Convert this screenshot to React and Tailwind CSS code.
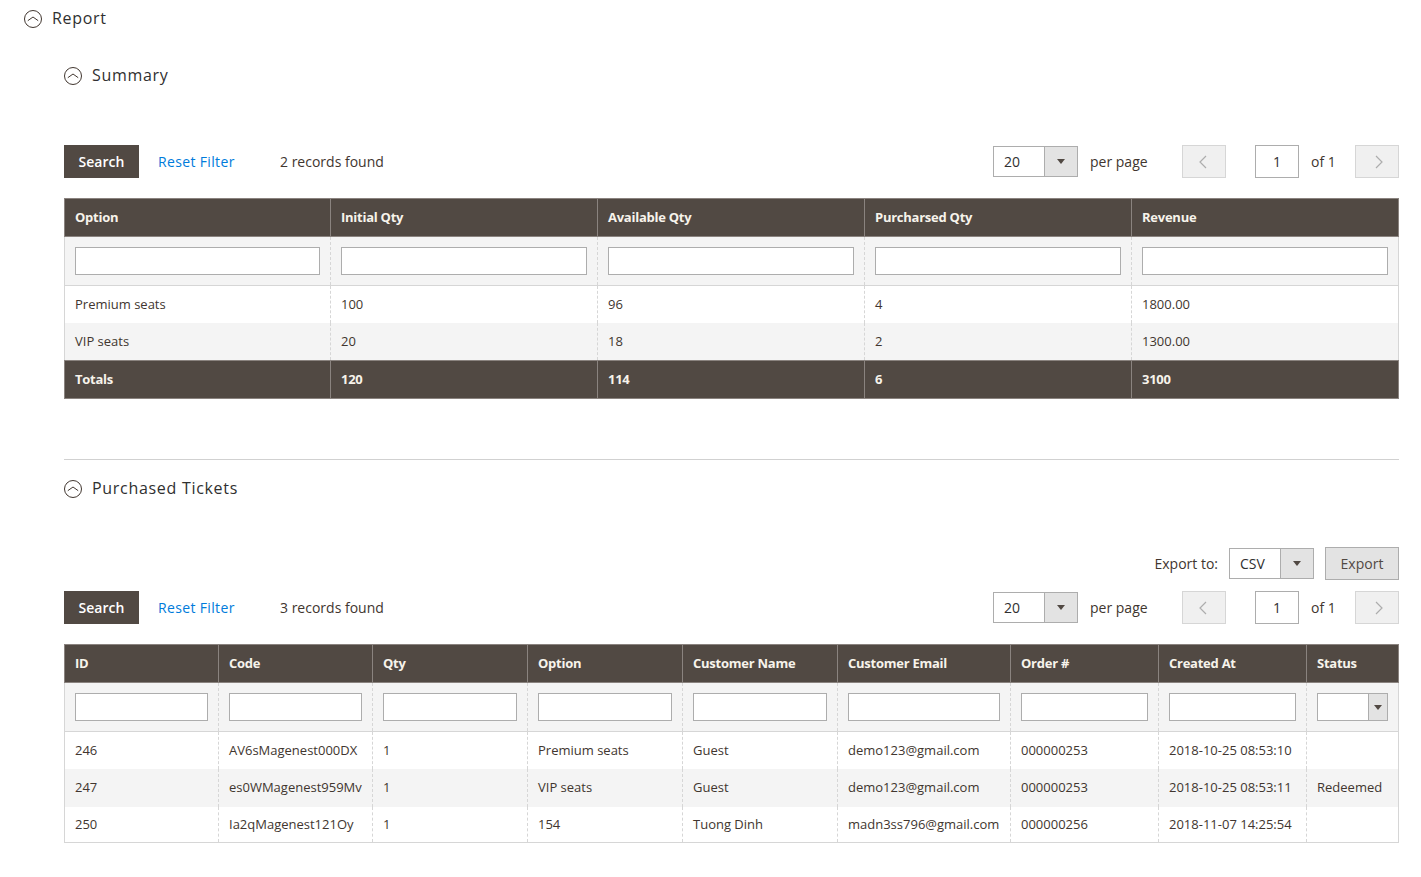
import React from 'react'

const FONT = "font-['Open_Sans',sans-serif]"

function Collapse({ title, className }) {
  return (
    <div className={`flex items-center gap-[10px] text-[#303030] ${className}`}>
      <svg width="18" height="18" viewBox="0 0 18 18" fill="none" stroke="#41362f" strokeWidth="1" className="shrink-0 mt-[2px]">
        <circle cx="9" cy="9" r="8.5" />
        <path d="M3.8 10.7 9 7l5.2 3.7" />
      </svg>
      <span className="text-[16px] font-medium leading-[22px] tracking-[0.7px]">{title}</span>
    </div>
  )
}

function Arrow() {
  return (
    <div className="w-0 h-0 border-l-[4px] border-r-[4px] border-t-[5px] border-l-transparent border-r-transparent border-t-[#514943]" />
  )
}

function SelectBox({ value, textWidth, height = 'h-[31px]' }) {
  return (
    <div className={`flex ${height} border border-[#adadad] bg-white text-[14px] text-[#303030]`}>
      <div className={`${textWidth} pl-[10px] leading-[29px]`}>{value}</div>
      <div className="w-[33px] flex items-center justify-center bg-[#e3e3e3] border-l border-[#adadad]">
        <Arrow />
      </div>
    </div>
  )
}

function PageButton({ dir }) {
  return (
    <div className="w-[44px] h-[33px] flex items-center justify-center bg-[#f0f0f0] border border-[#d6d6d6]">
      <svg width="10" height="14" viewBox="0 0 10 14" fill="none" stroke="#adadad" strokeWidth="1.2" className={dir === 'prev' ? 'mr-[3px]' : 'ml-[3px]'}>
        <path d={dir === 'prev' ? 'M8 1 2 7l6 6' : 'M2 1l6 6-6 6'} />
      </svg>
    </div>
  )
}

function Toolbar({ records }) {
  return (
    <div className="flex items-center h-[33px] text-[14px] text-[#41362f]">
      <div className="w-[75px] h-[33px] bg-[#514943] text-white font-semibold flex items-center justify-center">Search</div>
      <div className="ml-[19px] w-[76px] text-[#007bdb] whitespace-nowrap tracking-[0.35px]">Reset Filter</div>
      <div className="ml-[46px] whitespace-nowrap">{records} records found</div>
      <div className="ml-auto flex items-center">
        <SelectBox value="20" textWidth="w-[50px]" />
        <span className="ml-[12px] w-[92px] whitespace-nowrap">per page</span>
        <PageButton dir="prev" />
        <div className="ml-[29px] w-[44px] h-[33px] border border-[#adadad] bg-white flex items-center justify-center text-[#303030]">1</div>
        <span className="ml-[12px] w-[44px] whitespace-nowrap">of 1</span>
        <PageButton dir="next" />
      </div>
    </div>
  )
}

const thCls = 'h-[38px] px-[10px] py-0 text-left text-[13px] font-bold tracking-[-0.25px] text-[#f7f3eb] bg-[#514943] border border-[#8a837f]'
const filterCls = 'h-[49px] px-[10px] py-0 bg-[#f4f4f4] border border-dashed border-[#d6d6d6] [border-top-style:solid] [border-bottom-style:solid]'
const tdCls = 'h-[37.5px] px-[10px] py-0 text-[13px] text-[#41362f] border-x border-dashed border-x-[#d6d6d6] whitespace-nowrap'

function FilterInput() {
  return <div className="h-[28px] w-full border border-[#adadad] bg-white" />
}

const summaryCols = [
  ['Option', 'w-[266px]'],
  ['Initial Qty', 'w-[267px]'],
  ['Available Qty', 'w-[267px]'],
  ['Purcharsed Qty', 'w-[267px]'],
  ['Revenue', 'w-[267px]'],
]
const summaryRows = [
  ['Premium seats', '100', '96', '4', '1800.00'],
  ['VIP seats', '20', '18', '2', '1300.00'],
]
const summaryTotals = ['Totals', '120', '114', '6', '3100']

const ticketCols = [
  ['ID', 'w-[154px]'],
  ['Code', 'w-[154px]'],
  ['Qty', 'w-[155px]'],
  ['Option', 'w-[155px]'],
  ['Customer Name', 'w-[155px]'],
  ['Customer Email', 'w-[173px]'],
  ['Order #', 'w-[148px]'],
  ['Created At', 'w-[148px]'],
  ['Status', 'w-[92px]'],
]
const ticketRows = [
  ['246', 'AV6sMagenest000DX', '1', 'Premium seats', 'Guest', 'demo123@gmail.com', '000000253', '2018-10-25 08:53:10', ''],
  ['247', 'es0WMagenest959Mv', '1', 'VIP seats', 'Guest', 'demo123@gmail.com', '000000253', '2018-10-25 08:53:11', 'Redeemed'],
  ['250', 'Ia2qMagenest121Oy', '1', '154', 'Tuong Dinh', 'madn3ss796@gmail.com', '000000256', '2018-11-07 14:25:54', ''],
]

function SummaryTable() {
  return (
    <table className="mt-[20px] w-[1334px] table-fixed border-collapse border border-[#d6d6d6]">
      <thead>
        <tr>
          {summaryCols.map(([c, w]) => <th key={c} className={`${thCls} ${w}`}>{c}</th>)}
        </tr>
        <tr>
          {summaryCols.map(([c]) => <td key={c} className={filterCls}><FilterInput /></td>)}
        </tr>
      </thead>
      <tbody>
        {summaryRows.map((row, i) => (
          <tr key={row[0]} className={i % 2 === 1 ? 'bg-[#f4f4f4]' : 'bg-white'}>
            {row.map((v, j) => <td key={j} className={tdCls}>{v}</td>)}
          </tr>
        ))}
        <tr>
          {summaryTotals.map((v) => <td key={v} className={thCls}>{v}</td>)}
        </tr>
      </tbody>
    </table>
  )
}

function TicketsTable() {
  return (
    <table className="mt-[20px] w-[1335px] table-fixed border-collapse border border-[#d6d6d6]">
      <thead>
        <tr>
          {ticketCols.map(([c, w]) => <th key={c} className={`${thCls} ${w}`}>{c}</th>)}
        </tr>
        <tr>
          {ticketCols.map(([c]) => (
            <td key={c} className={filterCls}>
              {c === 'Status' ? (
                <div className="flex h-[28px] border border-[#adadad] bg-white">
                  <div className="flex-1" />
                  <div className="w-[19px] flex items-center justify-center bg-[#e3e3e3] border-l border-[#adadad]">
                    <Arrow />
                  </div>
                </div>
              ) : <FilterInput />}
            </td>
          ))}
        </tr>
      </thead>
      <tbody>
        {ticketRows.map((row, i) => (
          <tr key={row[0]} className={`${i % 2 === 1 ? 'bg-[#f4f4f4]' : 'bg-white'} [&:last-child>td]:h-[36px]`}>
            {row.map((v, j) => <td key={j} className={tdCls}>{v}</td>)}
          </tr>
        ))}
      </tbody>
    </table>
  )
}

export default function App() {
  return (
    <div className={`${FONT} h-[877px] overflow-hidden bg-white pl-[24px] pt-[7px]`}>
      <Collapse title="Report" />
      <div className="pl-[40px] pr-[22px]">
        <Collapse title="Summary" className="mt-[35px]" />
        <div className="mt-[59px]">
          <Toolbar records="2" />
        </div>
        <SummaryTable />
        <div className="mt-[60px] border-t border-[#d1d1d1]" />
        <Collapse title="Purchased Tickets" className="mt-[17px]" />
        <div className="mt-[48px] flex items-center justify-end h-[33px] text-[14px] text-[#41362f]">
          <span className="mr-[11px]">Export to:</span>
          <SelectBox value="CSV" textWidth="w-[50px]" />
          <div className="ml-[11px] w-[74px] h-[33px] bg-[#e3e3e3] border border-[#adadad] flex items-center justify-center text-[#514943]">Export</div>
        </div>
        <div className="mt-[11px]">
          <Toolbar records="3" />
        </div>
        <TicketsTable />
      </div>
    </div>
  )
}
